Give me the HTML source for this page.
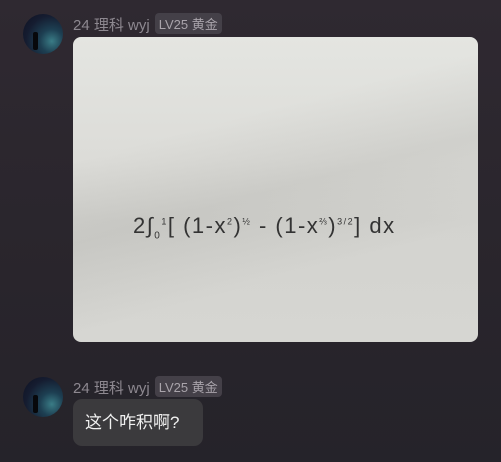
<!DOCTYPE html>
<html><head><meta charset="utf-8"><style>
body{margin:0;width:501px;height:462px;overflow:hidden;background:linear-gradient(180deg,#2f2931 0%,#29252c 60%,#25232a 100%);font-family:"Liberation Sans","Noto Sans CJK SC",sans-serif;position:relative}
.av{position:absolute;left:23px;width:40px;height:40px;border-radius:50%;background:radial-gradient(circle at 72% 68%,#3a7c86 0%,#1d3f52 30%,#151c30 65%,#0d1020 100%);overflow:hidden}
.av:before{content:"";position:absolute;left:10px;top:18px;width:5px;height:18px;background:#07080b;border-radius:2px}
.name{position:absolute;left:73px;font-size:15px;color:#8d8890;white-space:nowrap}
.tag{display:inline-block;background:#444048;color:#a9a4ab;font-size:13px;padding:1px 4px;border-radius:4px;margin-left:5px;vertical-align:1px}
.img{position:absolute;left:73px;top:37px;width:405px;height:305px;border-radius:8px;overflow:hidden;
background:linear-gradient(165deg,rgba(0,0,0,0) 30%,rgba(90,90,85,0.10) 50%,rgba(0,0,0,0) 72%),linear-gradient(180deg,#e4e5e1 0%,#dcdcd8 40%,#d3d3cf 60%,#d6d6d2 100%)}
.f{position:absolute;left:60px;top:176px;font-family:"Liberation Sans",sans-serif;font-size:22px;color:#333;white-space:nowrap;letter-spacing:1.5px}
.f sup{font-size:9px}.f sub{font-size:10px}
.bub{position:absolute;left:73px;top:399px;width:130px;height:47px;background:#3b3a3d;border-radius:9px;color:#f0f0f0;font-size:17px;line-height:47px;padding-left:12px;box-sizing:border-box}
</style></head><body>
<div class="av" style="top:14px"></div>
<div class="name" style="top:13px">24 理科 wyj<span class="tag">LV25 黄金</span></div>
<div class="img"><div class="f">2∫<sub>0</sub><sup>1</sup>[ (1-x<sup>2</sup>)<sup>½</sup> - (1-x<sup>⅔</sup>)<sup>3/2</sup>] dx</div></div>
<div class="av" style="top:377px"></div>
<div class="name" style="top:376px">24 理科 wyj<span class="tag">LV25 黄金</span></div>
<div class="bub">这个咋积啊?</div>
</body></html>
